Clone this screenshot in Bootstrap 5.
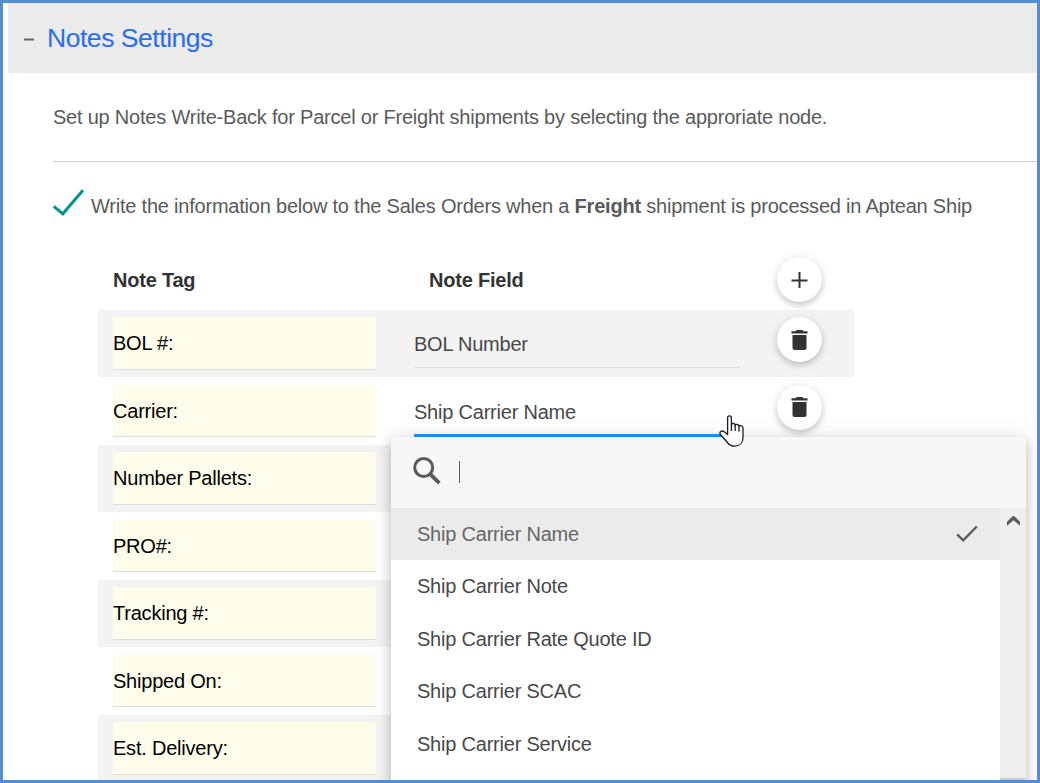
<!DOCTYPE html>
<html lang="en">
<head>
<meta charset="utf-8">
<meta name="viewport" content="width=device-width, initial-scale=1">
<title>Notes Settings</title>
<link href="https://cdn.jsdelivr.net/npm/bootstrap@5.3.0/dist/css/bootstrap.min.css" rel="stylesheet">
<style>
body { font-family: "Liberation Sans", Arial, sans-serif; font-size: 20px; letter-spacing: -.215px; line-height: 24px; color: #5a5a5a; }
.frame { height: 783px; border: 3px solid #548dd4; padding-left: 5px; }
.panel-head { height: 70px; background: #ebebeb; padding: 0 0 1px 15px; }
.panel-head svg { width: 12px; margin-right: 12px; }
.panel-title { font-size: 26.5px; line-height: 30px; color: #296df3; letter-spacing: -.46px; }
.intro { margin-left: 45px; padding: 32px 0; border-bottom: 1px solid #cfcfcf; }
.write-opt { margin-left: 44px; height: 86px; padding-top: 1px; }
.write-opt svg { margin-right: 6px; margin-top: -5px; }
.notes-grid { margin-left: 90px; width: 756px; }
.grid-row { height: 67.5px; padding-left: 15px; }
.odd { background: linear-gradient(#f3f3f3, #f3f3f3) 0 0 / 100% 67px no-repeat; }
.grid-head { height: 62px; font-weight: 700; color: #333; }
.head-text { padding-top: 2px; }
.field-title { margin-left: 15px; }
.tag-cell { width: 263px; margin-right: 38px; }
.tag-input { height: 52.5px; margin-top: 7px; background: #fffceb; border: 0; border-bottom: 1px solid #ddd; color: #000; padding: 1.5px 0 0; border-radius: 0; width: 100%; letter-spacing: -.215px; }
.field-cell { width: 326px; margin-right: 37px; }
.field-select { height: 58px; padding-top: 10px; color: #484848; border-bottom: 1px solid #ddd; }
.field-select.active { height: 59.5px; padding-top: 12px; border-bottom: 3px solid #2298fb; }
.round-btn { width: 45px; height: 45px; border-radius: 50%; background: #fff; border: 0; padding: 0; box-shadow: 0 3px 6px rgba(0,0,0,.2), 0 0 16px rgba(0,0,0,.06); }
.row-btn { margin-top: 7px; }
.picker { left: 391px; top: 437px; width: 635px; height: 343px; background: #fff; border-radius: 3px 3px 0 0; z-index: 2; }
.picker-shadow { left: 3px; top: 400px; width: 1034px; height: 380px; z-index: 1; }
.picker-shadow > div { left: 388px; top: 37px; width: 635px; height: 500px; border-radius: 3px; box-shadow: 0 4px 12px rgba(0,0,0,.2), 0 0 22px rgba(0,0,0,.09); }
.picker-search { height: 71px; background: #f7f7f7; padding: 0 0 4px 22px; }
.caret { width: 1px; height: 22px; background: #5a5a5a; margin: 3px 0 0 18px; }
.choice-list { height: 272px; }
.choice { height: 52.5px; padding: 0 22px 0 26px; color: #484848; }
.choice.chosen { height: 52px; background: #ebebeb; color: #666; }
.scroll-track { width: 26px; background: #efefef; }
.scroll-thumb { height: 2px; background: #cdcdcd; }
.pointer { left: 719px; top: 415px; z-index: 3; }
</style>
<script src="https://cdn.jsdelivr.net/npm/bootstrap@5.3.0/dist/js/bootstrap.bundle.min.js"></script>
</head>
<body>
<main class="frame position-relative overflow-hidden bg-white">
  <header class="panel-head d-flex align-items-center">
    <svg width="12" height="12" viewBox="0 0 12 12"><path d="M1 7.5h10" stroke="#666" stroke-width="2"/></svg>
    <span class="panel-title fw-normal">Notes Settings</span>
  </header>
  <div class="intro">Set up Notes Write-Back for Parcel or Freight shipments by selecting the approriate node.</div>
  <div class="write-opt d-flex align-items-center">
    <svg width="33" height="30" viewBox="0 0 33 30" fill="none"><path d="M1.8 18.3 10.8 25.8 31 2.2" stroke="#009688" stroke-width="3"/></svg>
    <span>Write the information below to the Sales Orders when a <b>Freight</b> shipment is processed in Aptean Ship</span>
  </div>
  <section class="notes-grid">
    <div class="grid-row grid-head d-flex align-items-center">
      <div class="tag-cell head-text">Note Tag</div>
      <div class="field-cell head-text"><span class="field-title">Note Field</span></div>
      <button class="round-btn d-flex align-items-center justify-content-center" aria-label="Add"><svg width="17" height="17" viewBox="0 0 17 17"><path d="M8.5 1v16M.5 9.5h16" stroke="#333" stroke-width="2"/></svg></button>
    </div>
    <div class="grid-row odd d-flex">
      <div class="tag-cell"><input class="tag-input" value="BOL #:"></div>
      <div class="field-cell"><div class="field-select d-flex align-items-center">BOL Number</div></div>
      <button class="round-btn row-btn d-flex align-items-center justify-content-center" aria-label="Delete"><svg width="17" height="20" viewBox="-.5 0 17 20" fill="#333"><path d="M0 1.3h4L5.2 0h5.6L12 1.3h4v2.2H0zM1 5h14v13a2 2 0 0 1-2 2H3a2 2 0 0 1-2-2z"/></svg></button>
    </div>
    <div class="grid-row d-flex">
      <div class="tag-cell"><input class="tag-input" value="Carrier:"></div>
      <div class="field-cell"><div class="field-select active d-flex align-items-center">Ship Carrier Name</div></div>
      <button class="round-btn row-btn d-flex align-items-center justify-content-center" aria-label="Delete"><svg width="17" height="20" viewBox="-.5 0 17 20" fill="#333"><path d="M0 1.3h4L5.2 0h5.6L12 1.3h4v2.2H0zM1 5h14v13a2 2 0 0 1-2 2H3a2 2 0 0 1-2-2z"/></svg></button>
    </div>
    <div class="grid-row odd"><div class="tag-cell"><input class="tag-input" value="Number Pallets:"></div></div>
    <div class="grid-row"><div class="tag-cell"><input class="tag-input" value="PRO#:"></div></div>
    <div class="grid-row odd"><div class="tag-cell"><input class="tag-input" value="Tracking #:"></div></div>
    <div class="grid-row"><div class="tag-cell"><input class="tag-input" value="Shipped On:"></div></div>
    <div class="grid-row odd"><div class="tag-cell"><input class="tag-input" value="Est. Delivery:"></div></div>
  </section>
</main>
<div class="picker-shadow position-absolute overflow-hidden"><div class="position-absolute"></div></div>
<div class="picker position-absolute overflow-hidden">
  <div class="picker-search d-flex align-items-center">
    <svg width="28" height="28" viewBox="0 0 28 28" fill="none" stroke="#5a5a5a"><circle cx="10.7" cy="10.5" r="9" stroke-width="3"/><path d="M17 16.8 26.3 26.1" stroke-width="3.8"/></svg>
    <span class="caret"></span>
  </div>
  <div class="choice-list d-flex">
    <div class="flex-grow-1">
      <div class="choice chosen d-flex align-items-center justify-content-between">Ship Carrier Name
        <svg width="22" height="18" viewBox="0 0 22 18" fill="none"><path d="M1.2 9.3 7.2 15.3 20.8 1.5" stroke="#5a5a5a" stroke-width="2.4"/></svg></div>
      <div class="choice d-flex align-items-center">Ship Carrier Note</div>
      <div class="choice d-flex align-items-center">Ship Carrier Rate Quote ID</div>
      <div class="choice d-flex align-items-center">Ship Carrier SCAC</div>
      <div class="choice d-flex align-items-center">Ship Carrier Service</div>
    </div>
    <div class="scroll-track d-flex flex-column justify-content-between">
      <svg class="mx-auto mt-2" width="13" height="10" viewBox="0 0 13 10" fill="#5a5a5a"><path d="M0 5.7 6.5 -.5 13 5.7V9.7L6.5 4.2 0 9.7z"/></svg>
      <div class="scroll-thumb"></div>
    </div>
  </div>
</div>
<svg class="pointer position-absolute" width="26" height="33" viewBox="0 0 26 33"><path d="M8.6 19.5V2.8C8.6.2 12.4.2 12.4 2.8V9.4C13 8 16 8.2 16.2 10C17 8.9 19.6 9.2 20 11C21.2 10 23.8 10.6 24 13.2V22.5C24 28 20.5 31.2 15.5 31.2C11.8 31.2 9.8 29.5 8 27L1.2 19.2C.1 16.8 3 15 5.2 16.8Z" fill="#fff" stroke="#1b1b2b" stroke-width="1.3" stroke-linejoin="round"/><path d="M12.4 9V16M16.2 10V16M20 11V16.5" stroke="#1b1b2b" stroke-width="1.3" fill="none"/></svg>
</body>
</html>
